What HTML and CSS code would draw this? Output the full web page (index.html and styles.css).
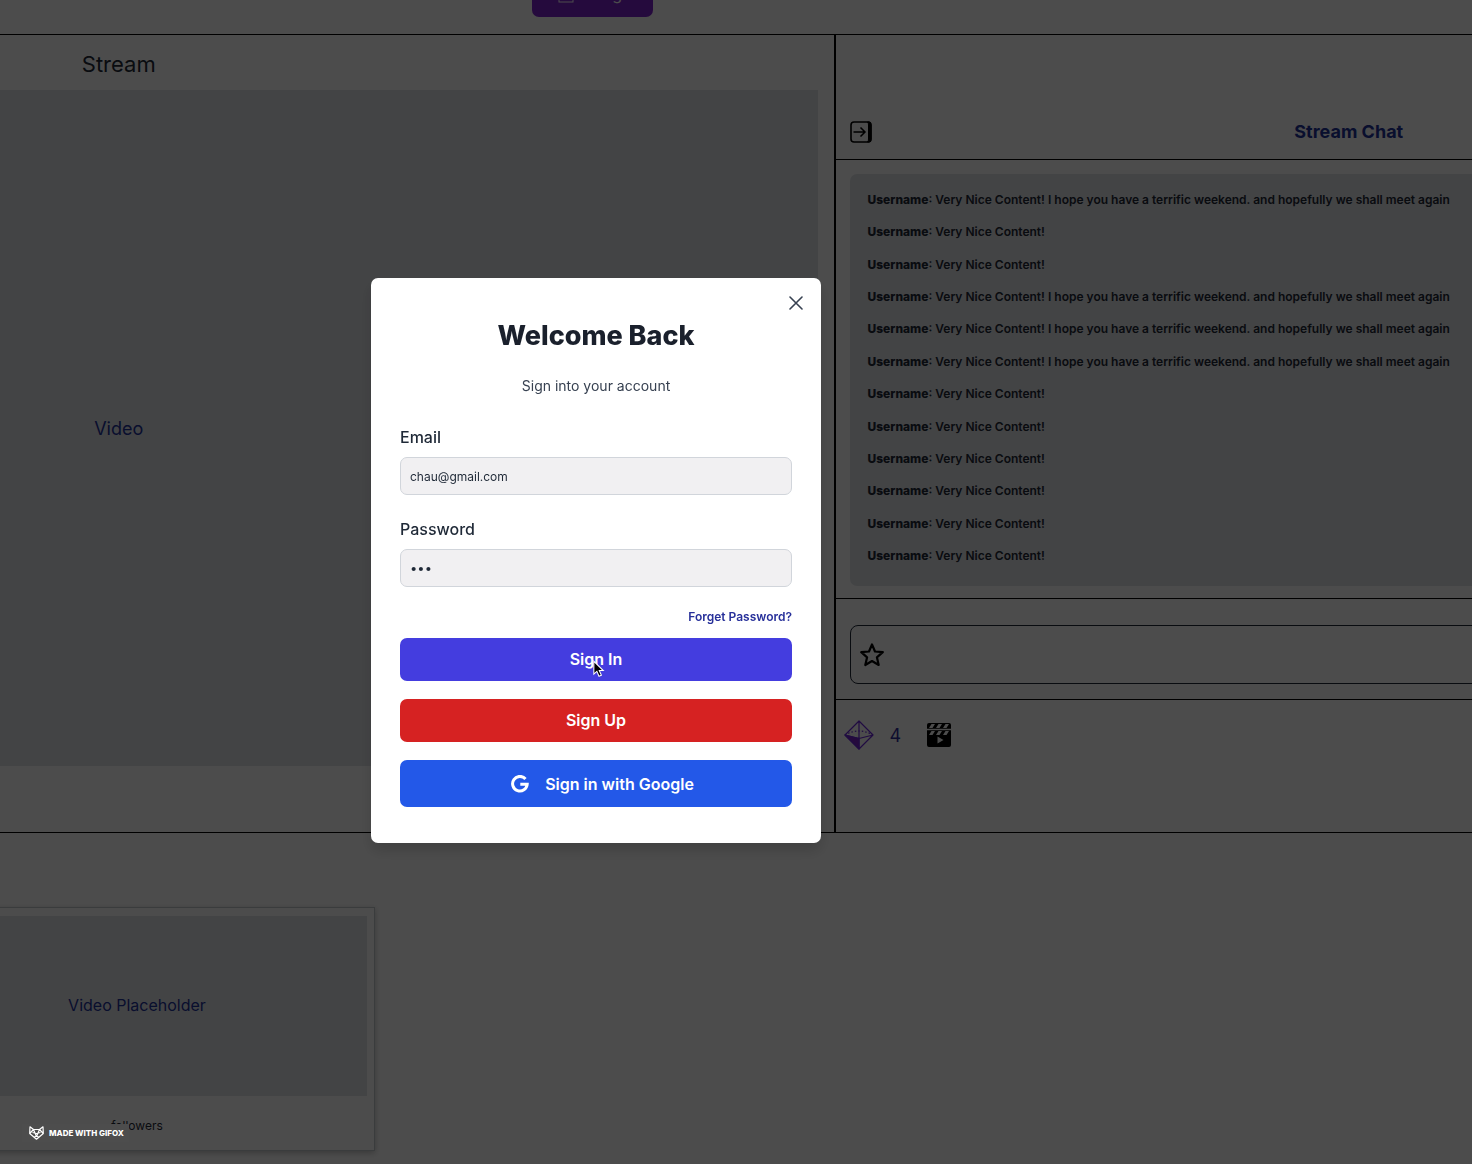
FILE: index.html
```
<!DOCTYPE html>
<html lang="en">
<head>
<meta charset="utf-8">
<title>Stream</title>
<link rel="stylesheet" href="styles.css">
</head>
<body>
<div class="page">
  <div class="canvas">
    <header class="topbar">
      <button class="login" type="button">
        <svg class="login-icon" viewBox="0 0 16 18" fill="none" stroke="currentColor" stroke-width="1"><rect x="1" y="1" width="14" height="16"/><path d="M4 9h8M9 6l3 3-3 3"/></svg>
        Login
      </button>
    </header>
    <main class="stage">
      <section class="stream">
        <h2 class="stream-title">Stream</h2>
        <div class="video">Video</div>
      </section>
      <aside class="chat">
        <div class="chat-head">
          <button class="icon-button" type="button" aria-label="Collapse chat">
            <svg width="22" height="22" viewBox="0 0 22 22"><rect x="1" y="1" width="20" height="20" rx="3" fill="none" stroke="#000" stroke-width="1.6"/><path d="M17.500 1H19q2 0 2 3v14q0 3-2 3h-1.500q1-1 1-3V4q0-2-1-3z" stroke="#000"/><path d="M3.500 11H15M10.500 6.500L15 11l-4.500 4.500" fill="none" stroke="#000" stroke-width="1.500"/></svg>
          </button>
          <h2 class="chat-title">Stream Chat</h2>
        </div>
        <div class="chat-body">
          <ul class="messages">
            <li><b>Username</b>: Very Nice Content! I hope you have a terrific weekend. and hopefully we shall meet again</li>
            <li><b>Username</b>: Very Nice Content!</li>
            <li><b>Username</b>: Very Nice Content!</li>
            <li><b>Username</b>: Very Nice Content! I hope you have a terrific weekend. and hopefully we shall meet again</li>
            <li><b>Username</b>: Very Nice Content! I hope you have a terrific weekend. and hopefully we shall meet again</li>
            <li><b>Username</b>: Very Nice Content! I hope you have a terrific weekend. and hopefully we shall meet again</li>
            <li><b>Username</b>: Very Nice Content!</li>
            <li><b>Username</b>: Very Nice Content!</li>
            <li><b>Username</b>: Very Nice Content!</li>
            <li><b>Username</b>: Very Nice Content!</li>
            <li><b>Username</b>: Very Nice Content!</li>
            <li><b>Username</b>: Very Nice Content!</li>
          </ul>
        </div>
        <div class="chat-compose">
          <div class="compose-box">
            <svg width="26" height="26" viewBox="0 0 26 26" fill="none" stroke="#000" stroke-width="2.200" stroke-linejoin="round"><path d="M13 2.500l3 7 7.800.7-5.900 5.100 1.800 7.700L13 19l-6.700 4 1.800-7.700-5.900-5.100 7.800-.7z"/></svg>
            <input class="compose-input" type="text" aria-label="Message">
          </div>
        </div>
        <div class="chat-foot">
          <svg width="30" height="30" viewBox="0 0 30 30" fill="none" stroke="#6d28d9" stroke-width="1.200" stroke-linejoin="round"><path d="M15 1L29 15 15 29 1 15zM15 1v28M1 15l14 3.500L29 15"/><path d="M1 15q14-8 28 0" stroke-dasharray="1.500 2"/><path d="M1 15l14 3.500V29z" fill="#7e22ce"/></svg>
          <span class="points">4</span>
          <svg class="clapper" width="26" height="26" viewBox="0 0 26 26"><path fill="#000" fill-rule="evenodd" d="M3 1h20q2 0 2 2v3.800H1V3q0-2 2-2zM5.500 2L3 6h3.500L9 2zM12.500 2L10 6h3.500L16 2zM19.500 2L17 6h3.500L23 2zM1 8.200h24V23q0 2-2 2H3q-2 0-2-2zM5.500 9L3 13h3.500L9 9zM12.500 9L10 13h3.500L16 9zM19.500 9L17 13h3.500L23 9zM11.500 14.500v7l6-3.500z"/></svg>
        </div>
      </aside>
    </main>
    <section class="shelf">
      <article class="card">
        <div class="card-video">Video Placeholder</div>
        <p class="card-meta">followers</p>
      </article>
    </section>
  </div>
</div>

<div class="overlay">
  <form class="modal" role="dialog" aria-labelledby="modal-title">
    <button class="close" type="button" aria-label="Close">
      <svg width="14" height="14" viewBox="0 0 14 14" stroke="currentColor" stroke-width="1.600" stroke-linecap="round"><path d="M1 1l12 12M13 1L1 13"/></svg>
    </button>
    <h1 class="modal-title" id="modal-title">Welcome Back</h1>
    <p class="modal-sub">Sign into your account</p>
    <div class="field">
      <label for="email">Email</label>
      <input id="email" type="email" value="chau@gmail.com">
    </div>
    <div class="field">
      <label for="password">Password</label>
      <input id="password" class="password" type="password" value="abc">
    </div>
    <a class="forget" href="#">Forget Password?</a>
    <div class="actions">
      <button class="btn btn-signin" type="button">Sign In
        <svg class="cursor" width="12" height="18" viewBox="0 0 14 20"><path d="M1 1v15l3.500-3.200L7 18.500l2.800-1.200-2.500-5.500H12z" fill="#000" stroke="#fff" stroke-width="1.200"/></svg>
      </button>
      <button class="btn btn-signup" type="button">Sign Up</button>
      <button class="btn btn-google" type="button">
        <svg width="18" height="18" viewBox="0 0 18 18" fill="none" stroke="#fff" stroke-width="3"><path d="M14.500 4A7.300 7.300 0 1 0 16.200 9.200H9.300"/></svg>
        Sign in with Google
      </button>
    </div>
  </form>
</div>

<div class="watermark">
  <svg width="15" height="14" viewBox="0 0 15 14" fill="none" stroke="#fff" stroke-width="1.200" stroke-linejoin="round"><path d="M1 .8L4.500 3.500h6L14 .8l.3 6.700L7.500 13.200.7 7.500zM.7 7.500l3.800-4 3 7 3-7 3.800 4M3.500 6.500l4 1 4-1M5.500 11l2-1 2 1"/></svg>
  MADE WITH GIFOX
</div>
</body>
</html>
```
FILE: styles.css
```
* {
  box-sizing: border-box;
}

body {
  margin: 0;
  background: #fff;
  color: #1f2937;
  font-family: Inter, "Liberation Sans", sans-serif;
  overflow: hidden;
}

h1, h2, p, ul {
  margin: 0;
  padding: 0;
}

button, input {
  font: inherit;
}

svg {
  flex: none;
}

.page {
  min-height: 100vh;
  overflow: hidden;
}

/* The page is scrolled: it runs past the window on both sides. */
.canvas {
  margin: -30px -390px 0 -582px;
}

.topbar {
  display: flex;
  justify-content: center;
  padding: 0 95px 17px 0;
  border-bottom: 1px solid #000;
}

.login {
  display: flex;
  align-items: center;
  gap: 20px;
  height: 47px;
  padding: 0 18px 0 26px;
  border: 0;
  border-radius: 7px;
  background: #7e22ce;
  color: #fff;
  font-size: 16px;
}

.login-icon {
  width: 16px;
  height: 18px;
}

.stage {
  display: grid;
  grid-template-columns: 58% 1fr;
  border-bottom: 1px solid #000;
}

.stream {
  display: flex;
  flex-direction: column;
  padding: 13px 16px 66px 2px;
  border-right: 2px solid #000;
}

.stream-title {
  margin-bottom: 10px;
  font-size: 22px;
  font-weight: 400;
  line-height: 32px;
  text-align: center;
}

.video, .card-video {
  display: flex;
  align-items: center;
  justify-content: center;
  background: #e1e4e8;
  color: #1e3299;
}

.video {
  flex: 1;
  font-size: 18px;
}

.chat {
  min-width: 0;
}

.chat-head {
  display: flex;
  align-items: center;
  padding: 84px 14px 15px;
  border-bottom: 1px solid #000;
}

.icon-button {
  display: flex;
  padding: 0;
  border: 0;
  background: none;
}

.chat-title {
  flex: 1;
  padding-right: 22px;
  color: #1e3299;
  font-size: 18px;
  font-weight: 700;
  line-height: 25px;
  text-align: center;
}

.chat-body {
  padding: 14px 14px 12px;
  border-bottom: 1px solid #000;
}

.messages {
  display: flex;
  flex-direction: column;
  justify-content: space-between;
  height: 412px;
  padding: 16px 18px 20px;
  border-radius: 7px;
  background: #e1e4e8;
  font-size: 12px;
  font-weight: 600;
  line-height: 20px;
  list-style: none;
  white-space: nowrap;
}

.messages b {
  font-weight: 800;
}

.chat-compose {
  padding: 26px 14px 15px;
  border-bottom: 1px solid #000;
}

.compose-box {
  display: flex;
  align-items: center;
  height: 59px;
  padding: 0 8px;
  border: 1px solid #1f2937;
  border-radius: 8px;
}

.compose-input {
  flex: 1;
  border: 0;
  background: none;
}

.chat-foot {
  display: flex;
  align-items: center;
  padding: 20px 8px 82px;
}

.points {
  margin: 0 25px 0 16px;
  color: #312e9a;
  font-size: 18px;
}

.shelf {
  display: flex;
  padding: 74px 0 13px 480px;
}

.card {
  width: 477px;
  padding: 8px 7px 14px 8px;
  border: 1px solid #c4c8ce;
  box-shadow: 0 2px 6px rgba(0, 0, 0, 0.25);
}

.card-video {
  height: 180px;
  margin-bottom: 20px;
  padding-bottom: 2px;
  font-size: 16px;
}

.card-meta {
  font-size: 12px;
  line-height: 20px;
  text-align: center;
}

.overlay {
  position: fixed;
  inset: 0;
  display: flex;
  align-items: center;
  justify-content: center;
  padding: 0 280px 43px 0;
  background: rgba(0, 0, 0, 0.7);
}

.modal {
  position: relative;
  display: flex;
  flex-direction: column;
  width: 450px;
  padding: 42px 29px 36px;
  border-radius: 7px;
  background: #fff;
  box-shadow: 0 8px 14px rgba(0, 0, 0, 0.15);
}

.close {
  position: absolute;
  top: 18px;
  right: 18px;
  display: flex;
  padding: 0;
  border: 0;
  background: none;
  color: #374151;
}

.modal-title {
  margin-bottom: 24px;
  color: #1a202c;
  font-size: 27px;
  font-weight: 800;
  line-height: 32px;
  text-align: center;
}

.modal-sub {
  margin-bottom: 30px;
  color: #374151;
  font-size: 14px;
  line-height: 20px;
  text-align: center;
}

.field {
  display: flex;
  flex-direction: column;
  gap: 9px;
  margin-bottom: 23px;
}

.field label {
  font-size: 16px;
  font-weight: 500;
  line-height: 22px;
}

.field input {
  height: 38px;
  padding: 0 9px;
  border: 1px solid #d1d5db;
  border-radius: 7px;
  background: #f1f0f2;
  color: #1f2937;
  font-size: 12px;
}

.field .password {
  font-size: 13px;
}

.forget {
  align-self: flex-end;
  margin: -3px 0 11px;
  color: #27309a;
  font-size: 12px;
  font-weight: 600;
  line-height: 20px;
  text-decoration: none;
}

.actions {
  display: flex;
  flex-direction: column;
  gap: 18px;
}

.btn {
  position: relative;
  display: flex;
  align-items: center;
  justify-content: center;
  gap: 16px;
  height: 43px;
  padding: 0 6px 2px;
  border: 0;
  border-radius: 7px;
  color: #fff;
  font-size: 16px;
  font-weight: 600;
}

.btn-signin {
  background: #443ddf;
}

.btn-signup {
  background: #d62222;
}

.btn-google {
  height: 47px;
  padding: 0 0 0 13px;
  background: #2358e8;
}

.cursor {
  position: absolute;
  top: 22px;
  left: 193px;
}

.watermark {
  position: fixed;
  bottom: 22px;
  left: 22px;
  display: flex;
  align-items: center;
  gap: 5px;
  height: 18px;
  padding: 0 5px 0 7px;
  background: #4d4d4d;
  color: #fff;
  font-size: 8px;
  font-weight: 800;
}
```
